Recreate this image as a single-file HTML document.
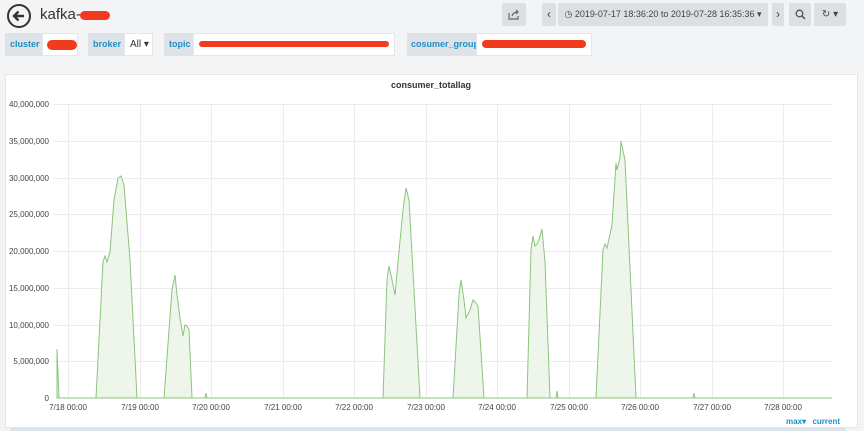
<!DOCTYPE html>
<html><head><meta charset="utf-8"><style>
*{box-sizing:border-box}
body{margin:0;width:864px;height:431px;background:#f3f4f6;font-family:"Liberation Sans",sans-serif;overflow:hidden;position:relative}
.abs{position:absolute;white-space:nowrap}
.back{left:7px;top:4px;width:24px;height:24px;border:2px solid #333;border-radius:50%}
.title{left:40px;top:6px;font-size:15px;color:#333}
.red{background:#f23a1f;border-radius:8px}
.lab{height:23px;top:33px;font-size:9px;font-weight:bold;color:#1f8fc6;line-height:23px;padding-left:5px;overflow:hidden}
.lb{background:#dfe3e8}
.val{background:#fff;border:1px solid #e3e6ea}
.btn{background:#dcdfe3;height:23px;top:3px;font-size:9px;color:#444;line-height:23px;text-align:center;border-radius:2px;overflow:hidden}
.panel{left:5px;top:74px;width:853px;height:354px;background:#fff;border:1px solid #e4e7ea}
</style></head><body>
<div class="abs back"><svg width="20" height="20" viewBox="0 0 20 20"><path d="M15 10H5M9.5 5.5L5 10l4.5 4.5" stroke="#333" stroke-width="2.4" fill="none"/></svg></div>
<div class="abs title">kafka-</div>
<div class="abs red" style="left:80px;top:11px;width:30px;height:9px"></div>

<div class="abs btn" style="left:502px;width:24px"><svg width="12" height="10" viewBox="0 0 12 10" style="vertical-align:middle"><path d="M1 3v6h9V6M4 6c1-3 3-4 6-4M8 0l2 2-2 2" stroke="#666" stroke-width="1.2" fill="none"/></svg></div>
<div class="abs btn" style="left:542px;width:14px;font-size:12px">&lsaquo;</div>
<div class="abs btn" style="left:558px;width:210px">&#9719; 2019-07-17 18:36:20 to 2019-07-28 16:35:36 ▾</div>
<div class="abs btn" style="left:772px;width:12px;font-size:12px">&rsaquo;</div>
<div class="abs btn" style="left:789px;width:22px"><svg width="11" height="11" viewBox="0 0 11 11" style="vertical-align:middle"><circle cx="4.5" cy="4.5" r="3.3" stroke="#555" stroke-width="1.3" fill="none"/><path d="M7 7l3 3" stroke="#555" stroke-width="1.5"/></svg></div>
<div class="abs btn" style="left:814px;width:32px;font-size:10px">&#x21BB; ▾</div>

<div class="abs lab lb" style="left:5px;width:38px">cluster</div>
<div class="abs val" style="left:42px;top:33px;width:36px;height:23px"></div>
<div class="abs red" style="left:47px;top:40px;width:30px;height:10px"></div>
<div class="abs lab lb" style="left:88px;width:36px">broker</div>
<div class="abs val" style="left:124px;top:33px;width:29px;height:23px;font-size:10px;line-height:21px;padding-left:5px;color:#333">All ▾</div>
<div class="abs lab lb" style="left:164px;width:30px">topic</div>
<div class="abs val" style="left:193px;top:33px;width:202px;height:23px"></div>
<div class="abs red" style="left:199px;top:41px;width:190px;height:6px"></div>
<div class="abs lab lb" style="left:407px;width:70px;padding-left:4px">cosumer_group</div>
<div class="abs val" style="left:476px;top:33px;width:116px;height:23px"></div>
<div class="abs red" style="left:482px;top:40px;width:104px;height:8px"></div>

<div class="abs panel"></div>
<svg class="abs" style="left:0;top:0" width="864" height="431">
<text x="431" y="88" font-size="9" font-weight="bold" fill="#333" text-anchor="middle">consumer_totallag</text>
<g stroke="#ececec" stroke-width="1">
<line x1="53" x2="832" y1="104.5" y2="104.5"/><line x1="53" x2="832" y1="141.5" y2="141.5"/><line x1="53" x2="832" y1="178.5" y2="178.5"/><line x1="53" x2="832" y1="214.5" y2="214.5"/><line x1="53" x2="832" y1="251.5" y2="251.5"/><line x1="53" x2="832" y1="288.5" y2="288.5"/><line x1="53" x2="832" y1="325.5" y2="325.5"/><line x1="53" x2="832" y1="361.5" y2="361.5"/>
<line x1="68.5" x2="68.5" y1="104" y2="398"/><line x1="140.5" x2="140.5" y1="104" y2="398"/><line x1="211.5" x2="211.5" y1="104" y2="398"/><line x1="283.5" x2="283.5" y1="104" y2="398"/><line x1="354.5" x2="354.5" y1="104" y2="398"/><line x1="426.5" x2="426.5" y1="104" y2="398"/><line x1="497.5" x2="497.5" y1="104" y2="398"/><line x1="569.5" x2="569.5" y1="104" y2="398"/><line x1="640.5" x2="640.5" y1="104" y2="398"/><line x1="712.5" x2="712.5" y1="104" y2="398"/><line x1="783.5" x2="783.5" y1="104" y2="398"/>
</g>
<g font-size="8" fill="#444" text-anchor="end">
<text x="49" y="107">40,000,000</text><text x="49" y="144">35,000,000</text><text x="49" y="181">30,000,000</text><text x="49" y="217">25,000,000</text><text x="49" y="254">20,000,000</text><text x="49" y="291">15,000,000</text><text x="49" y="328">10,000,000</text><text x="49" y="364">5,000,000</text><text x="49" y="401">0</text>
</g>
<g font-size="8" fill="#444" text-anchor="middle">
<text x="68" y="410">7/18 00:00</text><text x="140" y="410">7/19 00:00</text><text x="211" y="410">7/20 00:00</text><text x="283" y="410">7/21 00:00</text><text x="354" y="410">7/22 00:00</text><text x="426" y="410">7/23 00:00</text><text x="497" y="410">7/24 00:00</text><text x="569" y="410">7/25 00:00</text><text x="640" y="410">7/26 00:00</text><text x="712" y="410">7/27 00:00</text><text x="783" y="410">7/28 00:00</text>
</g>
<path d="M57 398L57 349L59 398L96 398L103 262L105 256L107 262L110 252L114 200L118 178L121 176L124 185L130 260L137 398L164 398L172 290L175 275L177 295L180 318L183 336L185 325L187 326L189 330L192 398L205 398L206 393L207 398L383 398L387 280L389 266L392 280L395 295L398 262L403 210L406 188L409 200L420 398L453 398L459 295L461 280L464 300L466 318L470 310L473 300L475 302L478 306L484 398L527 398L531 250L533 236L535 246L537 244L539 240L542 229L545 262L550 398L556 398L557 391L558 398L596 398L603 250L605 244L607 248L612 225L616 163L617 170L620 158L621 141L625 160L636 398L693 398L694 393L695 398L832 398L832 398Z" fill="#eef6ec" stroke="#8cc47e" stroke-width="1"/>
<text x="806" y="424" font-size="8" font-weight="bold" fill="#1f8fc6" text-anchor="end">max▾</text>
<text x="840" y="424" font-size="8" font-weight="bold" fill="#1f8fc6" text-anchor="end">current</text>
</svg>
<div class="abs" style="left:10px;top:428px;width:836px;height:3px;background:#dde3ea"></div>
</body></html>
